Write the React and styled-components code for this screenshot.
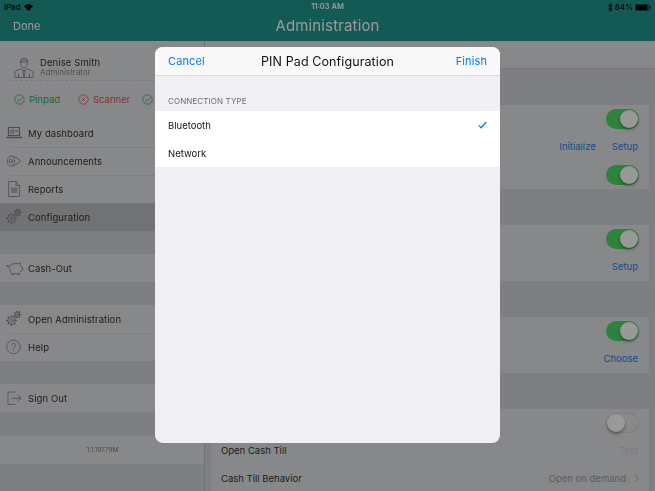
import React from "react";
import styled, { createGlobalStyle } from "styled-components";

const Global = createGlobalStyle`
  html, body { margin: 0; padding: 0; width: 655px; height: 491px; overflow: hidden; }
  body { font-family: Inter, "Liberation Sans", sans-serif; background: #d2d4da; }
  * { box-sizing: border-box; }
`;

const Screen = styled.div`
  position: relative; width: 655px; height: 491px; overflow: hidden;
  display: flex; flex-direction: column; filter: blur(0.35px);
`;
const Scrim = styled.div`
  position: absolute; inset: 0; background: rgba(0,0,0,0.4);
`;
const TopBar = styled.header`
  height: 41px; flex: none; background: #20968e; color: #fff; position: relative;
`;
const StatusBar = styled.div`
  height: 13px; padding: 1px 4px 0; display: flex; justify-content: space-between; align-items: center;
  font-size: 8px; color: #000; font-weight: 500;
`;
const StatusGroup = styled.div`display: flex; align-items: center; gap: ${p => p.$gap}px;`;
const Clock = styled.span`
  position: absolute; left: 0; right: 0; top: 1px; text-align: center; font-size: 7.5px; line-height: 12px; font-weight: 600;
`;
const NavBar = styled.div`
  height: 28px; display: flex; align-items: center; justify-content: center; position: relative;
`;
const NavTitle = styled.div`font-size: 15px; letter-spacing: 0.15px; margin-top: -4px;`;
const DoneBtn = styled.span`
  position: absolute; left: 13px; top: 6px; font-size: 11px; line-height: 15px;
`;
const Body = styled.div`flex: 1; display: flex; min-height: 0;`;
const Sidebar = styled.aside`
  width: 205px; flex: none; background: #d2d4da; border-right: 1px solid #bfc0c4; display: flex; flex-direction: column;
`;
const Profile = styled.div`
  height: 40px; flex: none; background: #e2e3e6; display: flex; padding: 16px 0 0 14px; gap: 6px; position: relative;
  &::after { content: ""; position: absolute; left: 10px; right: 0; bottom: 0; border-bottom: 1px dashed #c8c9cc; }
`;
const Avatar = styled.span`width: 20px; height: 21px; display: flex; color: #7a7b7f; flex: none;`;
const ProfileText = styled.div`display: flex; flex-direction: column;`;
const ProfileName = styled.div`font-size: 9.5px; line-height: 12px; color: #333; letter-spacing: 0.1px;`;
const ProfileRole = styled.div`font-size: 8px; line-height: 10px; color: #888; margin-top: -2px;`;
const StatusRow = styled.div`
  height: 38px; background: #e2e3e6; display: grid; grid-template-columns: repeat(3, 64px); align-items: center;
  padding: 0 0 1px 14px; flex: none; overflow: hidden;
`;
const StatusItem = styled.div`
  display: flex; align-items: center; gap: 4px; font-size: 9.5px; color: ${p => p.$color};
`;
const Group = styled.div`
  margin-top: ${p => p.$gap}px; flex: none; background: #e2e3e6;
  border-top: ${p => p.$first ? "0" : "1px solid #cfd0d3"}; border-bottom: 1px solid #cfd0d3;
`;
const Row = styled.div`
  height: 28px; display: flex; align-items: center; position: relative; padding-left: 5px;
  background: ${p => p.$active ? "#bdbec2" : "transparent"};
  & + &::before { content: ""; position: absolute; left: 10px; right: 0; top: 0; border-top: 1px solid #cfd0d3; }
`;
const RowIcon = styled.span`width: 18px; height: 18px; display: flex; color: #7f8084; flex: none; margin-right: 5px;`;
const RowLabel = styled.span`font-size: 9.5px; letter-spacing: 0.08px; color: #333;`;
const Version = styled.div`
  height: 28px; display: flex; align-items: center; justify-content: center; font-size: 6.5px; color: #777; padding-left: 1px;
`;

const Main = styled.main`flex: 1; min-width: 0; display: flex; flex-direction: column;`;
const MainHead = styled.div`height: 28px; flex: none; background: #e2e3e6; border-bottom: 1px solid #c8c9cc;`;
const Cards = styled.div`padding: 36px 6px 0; display: flex; flex-direction: column; gap: 36px;`;
const Card = styled.section`
  background: #e2e3e6; height: ${p => p.$h}px; flex: none; padding: 0 10px; display: flex; flex-direction: column; position: relative;
`;
const CardRow = styled.div`
  height: 28px; flex: none; display: flex; align-items: center; justify-content: flex-end; gap: 15px; padding-bottom: 1px;
`;
const Spread = styled(CardRow)`justify-content: space-between;`;
const Toggle = styled.span`
  width: 33px; height: 20px; border-radius: 10px; position: relative; display: block;
  background: ${p => p.$on ? "#4cd964" : "#e5e5e8"};
  box-shadow: ${p => p.$on ? "none" : "inset 0 0 0 1px #d0d0d3"};
  &::after {
    content: ""; position: absolute; top: 1px; ${p => p.$on ? "right: 1px" : "left: 1px"};
    width: 18px; height: 18px; border-radius: 50%; background: #fff; box-shadow: 0 2px 3px rgba(0,0,0,.35);
  }
`;
const LinkText = styled.span`font-size: 9.5px; color: #1a7ff0; margin-right: 1px;`;
const CellLabel = styled.span`font-size: 9.5px; color: #333;`;
const CellValue = styled.span`
  font-size: 9.5px; color: #999; display: flex; align-items: center; gap: 8px;
`;
const Faint = styled.span`font-size: 9.5px; color: #cfd0d4; margin-right: 1px;`;

const Modal = styled.div`
  position: absolute; left: 155px; top: 47px; width: 345px; height: 396px; border-radius: 8px; overflow: hidden;
  background: #efeff4; display: flex; flex-direction: column;
`;
const ModalHead = styled.div`
  height: 29px; flex: none; background: #f8f8f8; border-bottom: 1px solid #d8d8da; display: grid;
  grid-template-columns: 1fr auto 1fr; align-items: center; padding: 0 13px;
`;
const ModalBtn = styled.span`
  font-size: 11px; color: #007aff; letter-spacing: 0.1px; line-height: 14px; text-align: ${p => p.$end ? "right" : "left"};
`;
const ModalTitle = styled.span`font-size: 12.5px; color: #111; letter-spacing: 0.1px;`;
const SectionLabel = styled.div`
  padding: 20px 13px 0; height: 35px; font-size: 8px; line-height: 11px; color: #6d6d72; letter-spacing: 0.1px; flex: none;
`;
const OptionList = styled.div`background: #fff; flex: none;`;
const Option = styled.div`
  height: 28px; display: flex; align-items: center; justify-content: space-between; padding: 0 13px;
  font-size: 9.5px; color: #111;
`;

const Svg = ({ children, size = 18, w, h, vb }) => (
  <svg width={w || size} height={h || size} viewBox={vb || "0 0 18 18"} fill="none" stroke="currentColor" strokeWidth="0.8" strokeLinecap="round" strokeLinejoin="round">{children}</svg>
);
const UserIcon = () => (
  <Svg w={20} h={21} vb="0 0 20 21">
    <path d="M6.500 5.500c0-3 1.500-4.500 3.500-4.500s3.500 1.500 3.500 4.500c0 3-1.500 5.500-3.500 5.500S6.500 8.500 6.500 5.500z" />
    <path d="M6.500 5h7M7 3h6" />
    <path d="M1 20v-4c0-2 2-3 6-4l3 2 3-2c4 1 6 2 6 4v4z" />
    <path d="M10 14l-1 2 1 4 1-4zM4.500 20v-3M15.500 20v-3" />
  </Svg>
);
const Laptop = () => (
  <Svg>
    <rect x="3.500" y="3.500" width="11" height="8" strokeWidth="1.200" />
    <path d="M2 13.500h14.500" strokeWidth="1.600" />
    <path d="M6 9.500V6M8 9.500V5.500M10.500 6l2 2M10.500 8l2-2" strokeWidth="1" />
  </Svg>
);
const Announce = () => (
  <Svg>
    <ellipse cx="6" cy="9" rx="3.600" ry="5" />
    <circle cx="5.800" cy="9" r="1.700" />
    <path d="M7.500 4.200l4.500 1.800 3.500 3-3.500 3-4.500 1.800" />
  </Svg>
);
const Doc = () => (
  <Svg>
    <path d="M4 1.500h7l3.500 4v11H4z" />
    <path d="M11 1.500v4h3.500" />
    <path d="M6 7.500h6.500v5.500H6z" fill="currentColor" stroke="none" opacity=".5" />
  </Svg>
);
const gearTeeth = (cx, cy, r, teeth) => {
  const rows = [];
  for (let i = 0; i < teeth; i++) {
    const a = (i / teeth) * Math.PI * 2;
    rows.push(<path key={i} d={`M${cx + Math.cos(a) * r} ${cy + Math.sin(a) * r}L${cx + Math.cos(a) * (r + 1.2)} ${cy + Math.sin(a) * (r + 1.2)}`} strokeWidth="1.100" />);
  }
  return rows;
};
const Gears = () => (
  <Svg>
    <circle cx="6.500" cy="10.500" r="3.800" />
    <circle cx="6.500" cy="10.500" r="1.600" />
    {gearTeeth(6.5, 10.5, 3.8, 8)}
    <circle cx="12.500" cy="4.500" r="2.400" />
    <circle cx="12.500" cy="4.500" r="0.900" />
    {gearTeeth(12.5, 4.5, 2.4, 7)}
  </Svg>
);
const Piggy = () => (
  <Svg>
    <path d="M2 6.500l3 .8C6 5.500 8 4.500 10.500 4.500c1 0 1.800 0 2.700.5l2.300-1.300v2.800c.7.600 1.200 1.300 1.400 2.200h.6v2.600l-1.600.9c-.3.700-.8 1.200-1.400 1.600v1.700h-2.200v-1H8.500v1H6.300v-1.900c-1-1-1.400-2-1.300-3.400L2 6.500z" />
  </Svg>
);
const Help = () => (
  <svg width="18" height="18" viewBox="0 0 18 18" fill="none" stroke="currentColor" strokeWidth="0.8">
    <circle cx="8.500" cy="9" r="6.800" />
    <path d="M6.700 7.300c0-1.200 .9-1.900 1.800-1.900s1.900 .7 1.900 1.800c0 1.500-1.900 1.600-1.900 3.300M8.500 12.200v.8" strokeLinecap="round" />
  </svg>
);
const SignOut = () => (
  <Svg>
    <path d="M10 3H3v12.500h7" />
    <path d="M6.500 9.300h9.500M12.800 6.300l3.200 3-3.200 3" />
  </Svg>
);
const StatusOk = () => (
  <svg width="11" height="11" viewBox="0 0 11 11" fill="none" stroke="currentColor" strokeWidth="0.8"><circle cx="5.500" cy="5.500" r="4.700" /><path d="M3 5.700l1.800 1.700 3.200-3.600" /></svg>
);
const StatusBad = () => (
  <svg width="11" height="11" viewBox="0 0 11 11" fill="none" stroke="currentColor" strokeWidth="0.8"><circle cx="5.500" cy="5.500" r="4.700" /><path d="M3.600 3.600l3.800 3.800M7.400 3.600l-3.800 3.800" /></svg>
);
const Wifi = () => (
  <svg width="9" height="7" viewBox="0 0 9 7" fill="#000"><path d="M4.500 7L0 2.200C2.500 -0.400 6.500 -0.400 9 2.200z" /></svg>
);
const Bluetooth = () => (
  <svg width="5" height="9" viewBox="0 0 5 9" fill="none" stroke="#000" strokeWidth="0.9"><path d="M0.300 2.300l4 4L2.300 8.300V0.700l2 2-4 4" /></svg>
);
const Battery = () => (
  <svg width="16" height="7" viewBox="0 0 16 7"><rect x="0.300" y="0.300" width="13.700" height="6.400" rx="1.200" fill="none" stroke="#000" strokeWidth="0.6" /><rect x="1" y="1" width="11.500" height="5" fill="#000" /><rect x="14.500" y="2.200" width="1" height="2.600" fill="#000" /></svg>
);
const Check = () => (
  <svg width="9" height="8" viewBox="0 0 9 8" fill="none" stroke="#007aff" strokeWidth="1.300"><path d="M0.700 4.400l2.400 2.300L8.300 1" /></svg>
);
const Chevron = () => (
  <svg width="5" height="9" viewBox="0 0 5 9" fill="none" stroke="#aaa" strokeWidth="1"><path d="M0.500 0.700l3.800 3.800-3.800 3.800" /></svg>
);

const MenuRow = ({ icon, label, active }) => (
  <Row $active={active}><RowIcon>{icon}</RowIcon><RowLabel>{label}</RowLabel></Row>
);

export default function App() {
  return (
    <Screen>
      <Global />
      <TopBar>
        <StatusBar>
          <StatusGroup $gap={3}>iPad <Wifi /></StatusGroup>
          <StatusGroup $gap={2}><Bluetooth /><span>84%</span><Battery /></StatusGroup>
        </StatusBar>
        <Clock>11:03 AM</Clock>
        <NavBar>
          <DoneBtn>Done</DoneBtn>
          <NavTitle>Administration</NavTitle>
        </NavBar>
      </TopBar>
      <Body>
        <Sidebar>
          <Profile>
            <Avatar><UserIcon /></Avatar>
            <ProfileText>
              <ProfileName>Denise Smith</ProfileName>
              <ProfileRole>Administrator</ProfileRole>
            </ProfileText>
          </Profile>
          <StatusRow>
            <StatusItem $color="#41a85f"><StatusOk />Pinpad</StatusItem>
            <StatusItem $color="#e0555f"><StatusBad />Scanner</StatusItem>
            <StatusItem $color="#41a85f"><StatusOk /></StatusItem>
          </StatusRow>
          <Group $first $gap={0}>
            <MenuRow icon={<Laptop />} label="My dashboard" />
            <MenuRow icon={<Announce />} label="Announcements" />
            <MenuRow icon={<Doc />} label="Reports" />
            <MenuRow icon={<Gears />} label="Configuration" active />
          </Group>
          <Group $gap={21}><MenuRow icon={<Piggy />} label="Cash-Out" /></Group>
          <Group $gap={21}>
            <MenuRow icon={<Gears />} label="Open Administration" />
            <MenuRow icon={<Help />} label="Help" />
          </Group>
          <Group $gap={21}><MenuRow icon={<SignOut />} label="Sign Out" /></Group>
          <Group $gap={22}><Version>1.1.19779M</Version></Group>
        </Sidebar>
        <Main>
          <MainHead />
          <Cards>
            <Card $h={84}>
              <CardRow><Toggle $on /></CardRow>
              <CardRow><LinkText>Initialize</LinkText><LinkText>Setup</LinkText></CardRow>
              <CardRow><Toggle $on /></CardRow>
            </Card>
            <Card $h={56}>
              <CardRow><Toggle $on /></CardRow>
              <CardRow><LinkText>Setup</LinkText></CardRow>
            </Card>
            <Card $h={56}>
              <CardRow><Toggle $on /></CardRow>
              <CardRow><LinkText>Choose</LinkText></CardRow>
            </Card>
            <Card $h={84}>
              <CardRow><Toggle /></CardRow>
              <Spread><CellLabel>Open Cash Till</CellLabel><Faint>Test</Faint></Spread>
              <Spread><CellLabel>Cash Till Behavior</CellLabel><CellValue>Open on demand <Chevron /></CellValue></Spread>
            </Card>
          </Cards>
        </Main>
      </Body>
      <Scrim />
      <Modal>
        <ModalHead>
          <ModalBtn>Cancel</ModalBtn>
          <ModalTitle>PIN Pad Configuration</ModalTitle>
          <ModalBtn $end>Finish</ModalBtn>
        </ModalHead>
        <SectionLabel>CONNECTION TYPE</SectionLabel>
        <OptionList>
          <Option>Bluetooth<Check /></Option>
          <Option>Network</Option>
        </OptionList>
      </Modal>
    </Screen>
  );
}
